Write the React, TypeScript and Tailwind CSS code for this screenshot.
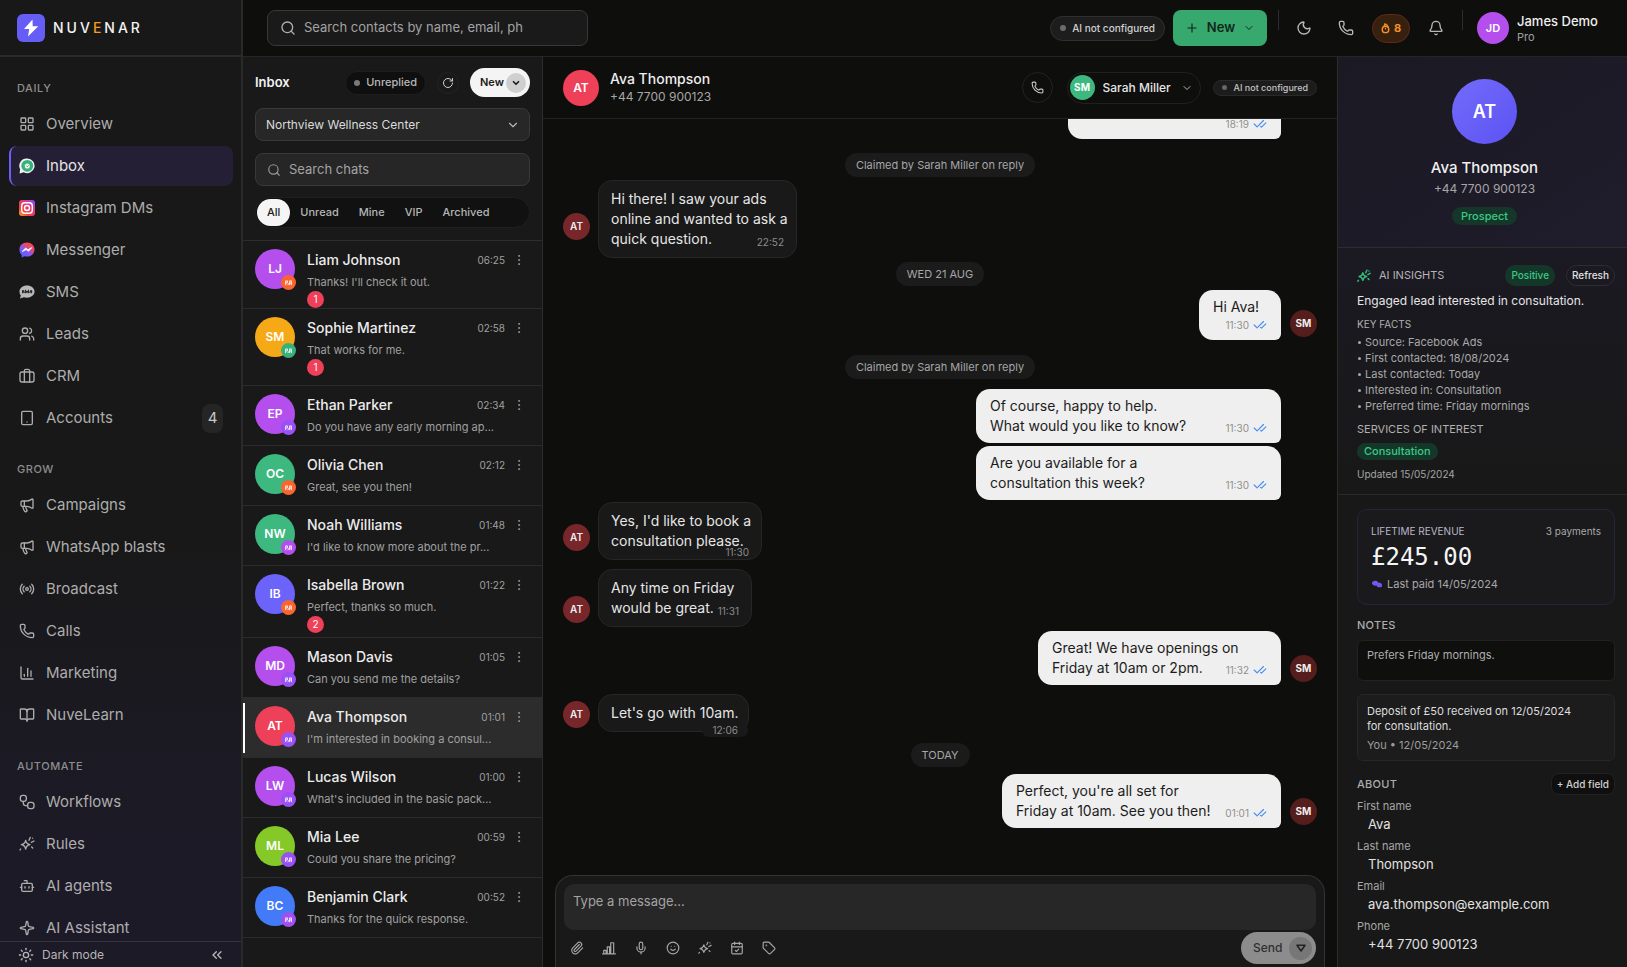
import { useState } from "react"
import type { ComponentType, ReactNode } from "react"
import {
  Bell,
  BookOpen,
  Bot,
  CalendarCheck,
  ChartColumn,
  CheckCheck,
  ChevronDown,
  ChevronsLeft,
  EllipsisVertical,
  LayoutGrid,
  Megaphone,
  Mic,
  Moon,
  Paperclip,
  Phone,
  Plus,
  Radio,
  RotateCw,
  Search,
  Smile,
  Sparkle,
  Sun,
  Tablet,
  Tag,
  Users,
} from "lucide-react"

type IconType = ComponentType<{ className?: string; strokeWidth?: number | string }>

function Stroke({ className, children, strokeWidth = 2 }: { className?: string; children: ReactNode; strokeWidth?: number | string }) {
  return (
    <svg
      viewBox="0 0 24 24"
      fill="none"
      stroke="currentColor"
      strokeWidth={strokeWidth}
      strokeLinecap="round"
      strokeLinejoin="round"
      className={className}
      aria-hidden="true"
    >
      {children}
    </svg>
  )
}

const SuitcaseIcon: IconType = (props) => (
  <Stroke {...props}>
    <rect x="1.5" y="6" width="21" height="15" rx="3" />
    <path d="M8 21V4.5A2.5 2.5 0 0 1 10.500 2h3A2.500 2.500 0 0 1 16 4.500V21" />
  </Stroke>
)

const WorkflowIcon: IconType = (props) => (
  <Stroke {...props}>
    <rect x="2" y="2" width="9" height="9" rx="3.500" />
    <rect x="13" y="12.500" width="9.500" height="9.500" rx="3.500" />
    <path d="M6.500 11v3a3.500 3.500 0 0 0 3.500 3.500h3" />
  </Stroke>
)

const SparklesIcon: IconType = (props) => (
  <Stroke {...props}>
    <path d="M10 6.500c.8 4 2.500 5.700 6.500 6.500-4 .8-5.700 2.500-6.500 6.500-.8-4-2.500-5.700-6.500-6.500 4-.8 5.700-2.500 6.500-6.500z" />
    <path d="M15 6.500 17 2M18.500 9.500l4-2M20.500 3.200v.1M2.500 19.500 1.500 21M19 16.500l1.500 1.500" />
  </Stroke>
)

const BarsIcon: IconType = (props) => (
  <Stroke {...props}>
    <path d="M1 22h22M3 22v-6h4v6M9 22V10h4v12M15 22V3h5v19" />
  </Stroke>
)

function WhatsappIcon({ className }: { className?: string }) {
  return (
    <svg viewBox="0 0 17 17" className={className} aria-hidden="true">
      <path d="M8.700.5a7.800 7.800 0 1 1-3.600 14.700L.6 16.500l.6-4.600A7.800 7.800 0 0 1 8.700.5z" fill="#f1f1f1" />
      <circle cx="8.800" cy="8.300" r="6.300" fill="#35b27a" />
      <circle cx="8.800" cy="8.500" r="2.700" fill="#f1f1f1" />
      <path d="M7.800 8.200 8.900 9.300l1.300-1.700" stroke="#35b27a" fill="none" />
    </svg>
  )
}

function InstagramIcon({ className }: { className?: string }) {
  return (
    <svg viewBox="0 0 16 16" className={className} aria-hidden="true">
      <defs>
        <linearGradient id="ig" x1="0" y1="1" x2="0.900" y2="0">
          <stop offset="0" stopColor="#fbab22" />
          <stop offset="0.300" stopColor="#f4433c" />
          <stop offset="0.650" stopColor="#e3397a" />
          <stop offset="1" stopColor="#8a4bf0" />
        </linearGradient>
      </defs>
      <rect width="16" height="16" rx="3" fill="url(#ig)" />
      <rect x="2.700" y="2.700" width="10.600" height="10.600" rx="3.200" fill="none" stroke="#fff" strokeWidth="1.400" />
      <circle cx="8" cy="8" r="2.500" fill="none" stroke="#fff" strokeWidth="1.400" />
    </svg>
  )
}

function MessengerIcon({ className }: { className?: string }) {
  return (
    <svg viewBox="0 0 17 17" className={className} aria-hidden="true">
      <defs>
        <linearGradient id="ms" x1="0.100" y1="1" x2="0.800" y2="0">
          <stop offset="0" stopColor="#3f6bff" />
          <stop offset="0.450" stopColor="#8a55f5" />
          <stop offset="0.750" stopColor="#f0475c" />
          <stop offset="1" stopColor="#f0475c" />
        </linearGradient>
      </defs>
      <path d="M8.500.5c4.700 0 8 3.200 8 7.500s-3.300 7.500-8 7.500c-.9 0-1.700-.1-2.500-.4L3 16.500l-.3-2.900A7.200 7.200 0 0 1 .5 8C.5 3.700 3.800.5 8.500.5z" fill="url(#ms)" />
      <path d="m3.500 10 3.600-3.500 2.300 1.700L13.500 6 10 9.800 7.600 8z" fill="#fff" stroke="#fff" strokeLinejoin="round" />
    </svg>
  )
}

function SmsIcon({ className }: { className?: string }) {
  return (
    <svg viewBox="0 0 17 17" className={className} aria-hidden="true">
      <path d="M8.500 1.500c4.500 0 8 2.800 8 6.500s-3.500 6.500-8 6.500c-1.200 0-2.300-.2-3.300-.5L1 15.500l1-3.300A6 6 0 0 1 .5 8c0-3.700 3.500-6.500 8-6.500z" fill="#b9b9b9" />
      <path d="M3.800 9.700V7.300l1.200-.1.600 2.500M7 9.700V7.200l1.500 1.600L10 7.200v2.500M11.500 9.700l.7-2.500 1.200.1v2.400" stroke="#222" fill="none" strokeWidth="1.200" />
    </svg>
  )
}

type NavItem = { label: string; icon: IconType; badge?: string; active?: boolean }

const navSections: { title: string; items: NavItem[] }[] = [
  {
    title: "DAILY",
    items: [
      { label: "Overview", icon: LayoutGrid },
      { label: "Inbox", icon: WhatsappIcon, active: true },
      { label: "Instagram DMs", icon: InstagramIcon },
      { label: "Messenger", icon: MessengerIcon },
      { label: "SMS", icon: SmsIcon },
      { label: "Leads", icon: Users },
      { label: "CRM", icon: SuitcaseIcon },
      { label: "Accounts", icon: Tablet, badge: "4" },
    ],
  },
  {
    title: "GROW",
    items: [
      { label: "Campaigns", icon: Megaphone },
      { label: "WhatsApp blasts", icon: Megaphone },
      { label: "Broadcast", icon: Radio },
      { label: "Calls", icon: Phone },
      { label: "Marketing", icon: ChartColumn },
      { label: "NuveLearn", icon: BookOpen },
    ],
  },
  {
    title: "AUTOMATE",
    items: [
      { label: "Workflows", icon: WorkflowIcon },
      { label: "Rules", icon: SparklesIcon },
      { label: "AI agents", icon: Bot },
      { label: "AI Assistant", icon: Sparkle },
    ],
  },
]

const chats = [
  { name: "Liam Johnson", initials: "LJ", text: "Thanks! I'll check it out.", time: "06:25", color: "bg-[#b44fee]", dot: "bg-[#f9652f]", unread: 1, pad: "pb-0" },
  { name: "Sophie Martinez", initials: "SM", text: "That works for me.", time: "02:58", color: "bg-[#f6a917]", dot: "bg-[#37b079]", unread: 1, pad: "pb-[9px]" },
  { name: "Ethan Parker", initials: "EP", text: "Do you have any early morning ap...", time: "02:34", color: "bg-[#b44fee]", dot: "bg-[#9a50f5]" },
  { name: "Olivia Chen", initials: "OC", text: "Great, see you then!", time: "02:12", color: "bg-[#3db87f]", dot: "bg-[#f9652f]" },
  { name: "Noah Williams", initials: "NW", text: "I'd like to know more about the pr...", time: "01:48", color: "bg-[#3db87f]", dot: "bg-[#b44fee]" },
  { name: "Isabella Brown", initials: "IB", text: "Perfect, thanks so much.", time: "01:22", color: "bg-[#6c63fb]", dot: "bg-[#f9652f]", unread: 2, pad: "pb-1" },
  { name: "Mason Davis", initials: "MD", text: "Can you send me the details?", time: "01:05", color: "bg-[#b44fee]", dot: "bg-[#9a50f5]" },
  { name: "Ava Thompson", initials: "AT", text: "I'm interested in booking a consul...", time: "01:01", color: "bg-[#ee4058]", dot: "bg-[#9a50f5]", active: true },
  { name: "Lucas Wilson", initials: "LW", text: "What's included in the basic pack...", time: "01:00", color: "bg-[#b44fee]", dot: "bg-[#9a50f5]" },
  { name: "Mia Lee", initials: "ML", text: "Could you share the pricing?", time: "00:59", color: "bg-[#84c928]", dot: "bg-[#9a50f5]" },
  { name: "Benjamin Clark", initials: "BC", text: "Thanks for the quick response.", time: "00:52", color: "bg-[#427af8]", dot: "bg-[#a04ff2]" },
]

function Sidebar() {
  return (
    <aside className="flex w-[243px] shrink-0 flex-col border-r-2 border-[#2a2a2a] bg-linear-to-b from-[#181818] from-55% to-[#1d1a28] to-90%">
      <div className="flex h-[57px] shrink-0 items-center gap-2 border-b-2 border-[#2a2a2a] pl-[17px]">
        <span className="flex size-7 items-center justify-center rounded-md bg-[#665cf6]">
          <svg viewBox="0 0 16 18" className="h-[18px] w-4" aria-hidden="true">
            <path d="M9.500.5 1 10h5.200L5 17.500 15.300 7.200H9.700z" fill="#fff" />
          </svg>
        </span>
        <span className="text-sm font-medium tracking-[3px] text-[#f2f2f2]">
          NUV<span className="text-[#f59e1b]">E</span>NAR
        </span>
      </div>

      <nav className="min-h-0 flex-1 overflow-hidden pt-[21px]">
        {navSections.map((section) => (
          <div key={section.title} className="mb-[21px]">
            <h2 className="mb-1.5 pl-[17px] text-[11px] leading-5 font-medium tracking-wider text-[#8d8d8d]">{section.title}</h2>
            <ul className="flex flex-col gap-0.5 pr-2 pl-[9px]">
              {section.items.map(({ label, icon: Icon, badge, active }) => (
                <li key={label}>
                  <a
                    href="#"
                    className={`flex h-10 items-center rounded-lg border-l-2 pl-2 text-[15px] ${
                      active ? "border-[#6c5ff5] bg-[#251f35] text-[#e4e4e4]" : "border-transparent text-[#adadad]"
                    }`}
                  >
                    <Icon className="size-4 shrink-0" strokeWidth={2} />
                    <span className="ml-[11px] flex-1">{label}</span>
                    {badge && (
                      <span className="mr-2.5 flex h-[29px] w-[21px] items-center justify-center rounded-lg bg-[#252525] text-[15px] text-[#c8c8c8]">
                        {badge}
                      </span>
                    )}
                  </a>
                </li>
              ))}
            </ul>
          </div>
        ))}
      </nav>

      <div className="flex h-[26px] shrink-0 items-center justify-between border-t border-[#36343f] pr-4 pl-[18px] text-[#b5b5b5]">
        <button className="flex items-center gap-2 text-xs">
          <Sun className="size-4" />
          Dark mode
        </button>
        <button aria-label="Collapse sidebar">
          <ChevronsLeft className="size-4" />
        </button>
      </div>
    </aside>
  )
}

function TopBar() {
  return (
    <header className="flex h-[57px] shrink-0 items-center border-b border-[#252525] pr-7 pl-6">
      <label className="flex h-9 w-[321px] items-center gap-2 rounded-lg border border-[#383838] bg-[#1a1a1a] px-3">
        <Search className="size-4 text-[#b0b0b0]" />
        <input
          type="text"
          aria-label="Search contacts"
          placeholder="Search contacts by name, email, ph"
          className="min-w-0 flex-1 bg-transparent text-[13px] placeholder:text-[#a3a3a3] focus:outline-none"
        />
      </label>

      <div className="ml-auto flex items-center">
        <span className="flex h-[25px] items-center gap-1.5 rounded-full border border-[#303030] bg-[#1d1d1d] px-[9px] text-[10px] font-medium text-[#d0d0d0]">
          <span className="size-1.5 rounded-full bg-[#6b6b6b]" />
          AI not configured
        </span>
        <button className="ml-2 flex h-9 w-[94px] items-center justify-center gap-2 rounded-lg bg-[#37a96f] text-[13px] font-semibold text-[#10271b]">
          <Plus className="size-3.5" />
          New
          <ChevronDown className="size-3" />
        </button>
        <span className="ml-[11px] h-5 w-px self-start bg-[#2c2c2c]" />
        <button aria-label="Theme" className="ml-[17px] text-[#b8b8b8]">
          <Moon className="size-4" />
        </button>
        <button aria-label="Call" className="ml-[26px] text-[#b8b8b8]">
          <Phone className="size-4" />
        </button>
        <button className="ml-[18px] flex h-[29px] w-[38px] items-center justify-center gap-1 rounded-full border border-[#5f2a1a] bg-[#38200f] text-[11px] font-bold text-[#f5922b]">
          <svg viewBox="0 0 10 12" className="h-[11px] w-[9px]" aria-hidden="true">
            <circle cx="5" cy="7" r="3.600" fill="none" stroke="#f5922b" strokeWidth="1.600" />
            <path d="M3 3.500C4 3 4.200 2 4.500.8 6.500 1.800 7.500 3 8 4.500M5 7V5.200" fill="none" stroke="#f5922b" strokeWidth="1.400" />
          </svg>
          8
        </button>
        <button aria-label="Notifications" className="ml-[18px] text-[#b8b8b8]">
          <Bell className="size-4" />
        </button>
        <span className="ml-[18px] h-5 w-px self-start bg-[#2c2c2c]" />
        <span className="ml-3.5 flex size-8 items-center justify-center rounded-full bg-[#b44fee] text-[11px] font-semibold text-white">JD</span>
        <div className="ml-2 w-[82px] whitespace-nowrap">
          <p className="text-[13px] leading-[18px] font-medium text-[#efefef]">James Demo</p>
          <p className="text-[11px] leading-3.5 text-[#a0a0a0]">Pro</p>
        </div>
      </div>
    </header>
  )
}

const filters = ["All", "Unread", "Mine", "VIP", "Archived"]

function ChatList() {
  const [filter, setFilter] = useState("All")

  return (
    <section className="flex w-[300px] shrink-0 flex-col border-r border-[#2d2d2d] bg-[#191919]">
      <div className="border-b border-[#2d2d2d] px-3 pt-[11px] pb-3">
        <div className="flex h-[29px] items-center">
          <h1 className="mr-auto text-[13px] font-semibold text-[#f2f2f2]">Inbox</h1>
          <button className="flex h-6 items-center gap-1.5 rounded-full border border-[#1e1e1e] bg-[#0f0f0f] px-2 text-[11px] font-medium text-[#b8b8b8]">
            <span className="size-1.5 rounded-full bg-[#7a7a7a]" />
            Unreplied
          </button>
          <button aria-label="Refresh" className="mx-3 flex size-5 items-center justify-center rounded-full text-[#d0d0d0] ring-1 ring-[#222]">
            <RotateCw className="size-3" />
          </button>
          <button className="flex h-[29px] w-[60px] items-center justify-between rounded-full bg-[#f4f4f4] pr-1 pl-2.5 text-[11px] font-semibold text-[#1b1b1b]">
            New
            <span className="flex size-5 items-center justify-center rounded-full bg-[#cfcfcf]">
              <ChevronDown className="size-2.5" strokeWidth={4} />
            </span>
          </button>
        </div>

        <div className="relative mt-[11px]">
          <select
            aria-label="Location"
            className="h-[33px] w-full appearance-none rounded-lg border border-[#393939] bg-[#272727] pl-2.5 text-xs text-[#dadada]"
          >
            <option>Northview Wellness Center</option>
          </select>
          <ChevronDown className="pointer-events-none absolute top-[10px] right-2.5 size-3.5 text-[#b5b5b5]" />
        </div>

        <label className="mt-3 flex h-[33px] items-center gap-2 rounded-lg border border-[#393939] bg-[#262626] px-[11px]">
          <Search className="size-3.5 text-[#999]" />
          <input
            type="text"
            aria-label="Search chats"
            placeholder="Search chats"
            className="min-w-0 flex-1 bg-transparent text-[13px] placeholder:text-[#a3a3a3] focus:outline-none"
          />
        </label>

        <div className="mt-[11px] flex h-[31px] items-center rounded-full border border-[#1f1f1f] bg-[#111] px-px">
          {filters.map((f) => (
            <button
              key={f}
              onClick={() => setFilter(f)}
              className={`h-[27px] rounded-full px-2.5 text-[11px] font-medium ${
                f === filter ? "bg-[#f5f5f5] text-[#1b1b1b]" : "text-[#b5b5b5]"
              }`}
            >
              {f}
            </button>
          ))}
        </div>
      </div>

      <ul className="min-h-0 flex-1 overflow-hidden">
        {chats.map((chat) => (
          <li
            key={chat.name}
            className={`relative flex border-b border-[#2b2b2b] pt-2 pr-4 pl-3 ${chat.pad ?? "pb-[7px]"} ${chat.active ? "bg-[#2c2c2c]" : ""}`}
          >
            {chat.active && <span className="absolute top-[5px] bottom-1 left-0 w-0.5 bg-white" />}
            <div className={`relative flex size-10 shrink-0 items-center justify-center rounded-full text-xs font-semibold text-white ${chat.color}`}>
              {chat.initials}
              <span className={`absolute -right-px -bottom-px flex size-[15px] items-center justify-center rounded-full ${chat.dot}`}>
                <svg viewBox="0 0 8 7" className="h-[6px] w-[7px]" aria-hidden="true">
                  <path d="M.7 6V1h2v2.500h-2M5.300 6V1h2v5M3 6l2-2.500M5.300 3.500h2" fill="none" stroke="#fff" />
                </svg>
              </span>
            </div>
            <div className="ml-3 min-w-0 flex-1">
              <div className="flex h-[22px] items-center">
                <h3 className="flex-1 truncate text-sm font-medium text-[#ececec]">{chat.name}</h3>
                <time className="text-[10px] text-[#a0a0a0]">{chat.time}</time>
                <button aria-label="Chat options" className="ml-[7px] text-[#999]">
                  <EllipsisVertical className="size-3.5" strokeWidth={1.5} />
                </button>
              </div>
              <p className="text-[11px] leading-[22px] whitespace-nowrap text-[#a0a0a0]">{chat.text}</p>
              {chat.unread && (
                <span className="-mt-0.5 flex size-[17px] items-center justify-center rounded-full bg-[#ee4058] text-[10px] text-white">
                  {chat.unread}
                </span>
              )}
            </div>
          </li>
        ))}
      </ul>
    </section>
  )
}

function Meta({ time, className }: { time: string; className?: string }) {
  return (
    <span className={`flex items-center gap-1 text-[10px] text-[#8f8f8f] ${className ?? ""}`}>
      {time}
      <CheckCheck className="size-3.5 text-[#4c8df0]" />
    </span>
  )
}

function Incoming({
  lines,
  time,
  width,
  gap,
  timePos = "right-3 bottom-2",
  avatarGap = "mb-1",
}: {
  lines: string[]
  time: string
  width: string
  gap: string
  timePos?: string
  avatarGap?: string
}) {
  return (
    <div className={`flex items-end gap-2 ${gap}`}>
      <span className={`flex size-[27px] items-center justify-center rounded-full bg-[#77262a] text-[10px] font-semibold text-[#eee] ${avatarGap}`}>AT</span>
      <div className={`relative rounded-[14px] border border-[#262626] bg-[#191919] px-3 py-2 text-sm leading-5 whitespace-nowrap text-[#e6e6e6] ${width}`}>
        {lines.map((line) => (
          <p key={line}>{line}</p>
        ))}
        <time className={`absolute text-[10px] leading-3.5 text-[#8c8c8c] ${timePos}`}>{time}</time>
      </div>
    </div>
  )
}

function Outgoing({ lines, time, width, gap, avatar, stacked }: { lines: string[]; time: string; width: string; gap: string; avatar?: boolean; stacked?: boolean }) {
  return (
    <div className={`flex items-end justify-end gap-[9px] ${gap}`}>
      <div className={`relative rounded-[14px] rounded-br-md bg-[#efefef] px-3.5 py-[7px] text-sm leading-5 whitespace-nowrap text-[#1c1c1c] ${width}`}>
        {lines.map((line) => (
          <p key={line}>{line}</p>
        ))}
        <Meta time={time} className={stacked ? "justify-end leading-4" : "absolute right-3.5 bottom-2 leading-3.5"} />
      </div>
      {avatar ? (
        <span className="mb-[3px] flex size-[27px] items-center justify-center rounded-full bg-[#551d1b] text-[10px] font-bold text-[#eee]">SM</span>
      ) : (
        <span className="w-[27px]" />
      )}
    </div>
  )
}

function Divider({ children, gap }: { children: ReactNode; gap: string }) {
  return (
    <div className={`flex justify-center ${gap}`}>
      <span className="flex h-6 items-center rounded-full bg-[#1b1b1b] px-[11px] text-[11px] text-[#a6a6a6]">{children}</span>
    </div>
  )
}

const composerTools: { label: string; icon: IconType }[] = [
  { label: "Attach", icon: Paperclip },
  { label: "Poll", icon: BarsIcon },
  { label: "Record", icon: Mic },
  { label: "Emoji", icon: Smile },
  { label: "AI reply", icon: SparklesIcon },
  { label: "Schedule", icon: CalendarCheck },
  { label: "Tag", icon: Tag },
]

function Conversation() {
  return (
    <main className="flex min-w-0 flex-1 flex-col bg-[#0e0e0d]">
      <div className="flex h-[62px] shrink-0 items-center border-b border-[#232323] pr-5 pl-5">
        <span className="flex size-9 items-center justify-center rounded-full bg-[#ee4058] text-xs font-semibold text-white">AT</span>
        <div className="ml-[11px]">
          <h2 className="text-sm leading-[18px] font-medium text-[#ededed]">Ava Thompson</h2>
          <p className="text-xs leading-[18px] text-[#a6a6a6]">+44 7700 900123</p>
        </div>
        <button aria-label="Call contact" className="ml-auto flex size-[31px] items-center justify-center rounded-full border border-[#232323] text-[#c9c9c9]">
          <Phone className="size-[13px]" />
        </button>
        <div className="relative ml-3.5">
          <span className="absolute top-[3px] left-[3px] flex size-[25px] items-center justify-center rounded-full bg-[#3db87f] text-[10px] font-bold text-white">SM</span>
          <select aria-label="Assigned to" className="h-8 w-[134px] appearance-none rounded-full border border-[#202020] bg-transparent pl-[35px] text-xs font-medium text-[#e6e6e6]">
            <option>Sarah Miller</option>
          </select>
          <ChevronDown className="pointer-events-none absolute top-2.5 right-2 size-3 text-[#b5b5b5]" />
        </div>
        <span className="ml-3 flex h-4 items-center gap-[7px] rounded-full border border-[#2a2a2a] bg-[#1c1c1c] px-2 text-[9px] font-medium text-[#c4c4c4]">
          <span className="size-[5px] rounded-full bg-[#666]" />
          AI not configured
        </span>
      </div>

      <div className="min-h-0 flex-1 overflow-hidden pr-5 pl-5">
        <div className="mr-9 ml-auto flex h-5 w-[213px] justify-end rounded-b-[14px] rounded-br-md bg-[#efefef] pr-3.5">
          <Meta time="18:19" className="h-2.5 leading-3.5" />
        </div>
        <Divider gap="mt-3.5">Claimed by Sarah Miller on reply</Divider>
        <Incoming gap="mt-[3px]" width="w-[199px]" avatarGap="mb-[18px]" lines={["Hi there! I saw your ads", "online and wanted to ask a", "quick question."]} time="22:52" />
        <Divider gap="mt-1">WED 21 AUG</Divider>
        <Outgoing gap="mt-1" width="w-[82px]" lines={["Hi Ava!"]} time="11:30" avatar stacked />
        <Divider gap="mt-[15px]">Claimed by Sarah Miller on reply</Divider>
        <Outgoing gap="mt-2.5" width="w-[305px]" lines={["Of course, happy to help.", "What would you like to know?"]} time="11:30" />
        <Outgoing gap="mt-[3px]" width="w-[305px]" lines={["Are you available for a", "consultation this week?"]} time="11:30" />
        <Incoming gap="mt-0.5" width="w-[164px]" avatarGap="mb-[9px]" lines={["Yes, I'd like to book a", "consultation please."]} time="11:30" timePos="right-3 bottom-0" />
        <Incoming gap="mt-[9px]" width="w-[154px]" lines={["Any time on Friday", "would be great."]} time="11:31" />
        <Outgoing gap="mt-1" width="w-[243px]" lines={["Great! We have openings on", "Friday at 10am or 2pm."]} time="11:32" avatar />
        <Incoming
          gap="mt-[9px]"
          width="w-[151px]"
          lines={["Let's go with 10am."]}
          time="12:06"
          timePos="right-0 -bottom-1.5 rounded-full bg-[#191919] px-2.5"
        />
        <Divider gap="mt-[11px]">TODAY</Divider>
        <Outgoing gap="mt-[7px]" width="w-[279px]" lines={["Perfect, you're all set for", "Friday at 10am. See you then!"]} time="01:01" avatar />
      </div>

      <div className="mx-3 shrink-0 rounded-t-[18px] border border-b-0 border-[#333] bg-[#191919] px-2 pt-2">
        <textarea
          aria-label="Message"
          placeholder="Type a message..."
          className="block h-[46px] w-full resize-none rounded-[10px] bg-[#272727] px-[9px] pt-2 text-[13px] placeholder:text-[#a3a3a3] focus:outline-none"
        />
        <div className="mt-0.5 flex h-[35px] items-start">
          <div className="flex h-8 items-center gap-[18px] pl-1.5 text-[#a6a6a6]">
            {composerTools.map(({ label, icon: Icon }) => (
              <button key={label} aria-label={label}>
                <Icon className="size-3.5" />
              </button>
            ))}
          </div>
          <button className="ml-auto flex h-8 w-[75px] items-center justify-between rounded-full bg-[#8c8c8c] pr-1 pl-3 text-xs font-medium text-[#303030]">
            Send
            <span className="flex size-[23px] items-center justify-center rounded-full bg-[#777]">
              <svg viewBox="0 0 10 8" className="h-2 w-2.5" aria-hidden="true">
                <path d="M1 1.200h8L5 7z" fill="none" stroke="#222" strokeWidth="1.500" strokeLinejoin="round" />
              </svg>
            </span>
          </button>
        </div>
      </div>
    </main>
  )
}

const facts = [
  "Source: Facebook Ads",
  "First contacted: 18/08/2024",
  "Last contacted: Today",
  "Interested in: Consultation",
  "Preferred time: Friday mornings",
]

const fields = [
  { id: "first", label: "First name", value: "Ava" },
  { id: "last", label: "Last name", value: "Thompson" },
  { id: "email", label: "Email", value: "ava.thompson@example.com" },
  { id: "phone", label: "Phone", value: "+44 7700 900123" },
]

function ContactPanel() {
  return (
    <aside className="flex w-[290px] shrink-0 flex-col overflow-hidden border-l border-[#2d2d2d] bg-[#181818]">
      <div className="flex shrink-0 flex-col items-center border-b border-[#2d2d2d] bg-linear-to-br from-[#1b1922] to-[#1f1c2c] pt-[22px] pb-[22px] pl-1">
        <span className="flex size-[65px] items-center justify-center rounded-full bg-linear-to-br from-[#736bfb] to-[#5d52f3] text-lg font-semibold text-white">AT</span>
        <h2 className="mt-[13px] text-[15px] leading-[22px] font-medium text-[#f0f0f0]">Ava Thompson</h2>
        <p className="text-xs leading-5 text-[#a6a6a6]">+44 7700 900123</p>
        <span className="mt-2 flex h-[18px] items-center rounded-full bg-[#15372a] px-[9px] text-[11px] font-medium text-[#3cc986]">Prospect</span>
      </div>

      <div className="shrink-0 border-b border-[#2a2a2a] bg-linear-to-b from-[#1b1922] to-[#181818] pt-[17px] pr-3 pb-3 pl-[19px]">
        <div className="flex h-[21px] items-center">
          <SparklesIcon className="size-3.5 text-[#35b878]" strokeWidth={2.5} />
          <h3 className="ml-2 text-[11px] text-[#b5b5b5]">AI INSIGHTS</h3>
          <span className="ml-auto flex h-[21px] items-center rounded-full bg-[#15372a] px-1.5 text-[10px] font-medium text-[#3cc986]">Positive</span>
          <button className="ml-[11px] h-[21px] rounded-full border border-[#2e2e2e] px-[5px] text-[10px] font-medium text-[#e0e0e0]">Refresh</button>
        </div>
        <p className="mt-1.5 text-xs leading-[18px] whitespace-nowrap text-[#e6e6e6]">Engaged lead interested in consultation.</p>
        <h4 className="mt-1.5 text-[10px] leading-4 text-[#b0b0b0]">KEY FACTS</h4>
        <ul className="mt-0.5 text-[11px] leading-4 text-[#a8a8a8]">
          {facts.map((fact) => (
            <li key={fact} className="flex items-center gap-1 pl-px">
              <span className="size-[3px] rounded-full bg-[#a8a8a8]" />
              {fact}
            </li>
          ))}
        </ul>
        <h4 className="mt-[7px] text-[11px] leading-4 text-[#b0b0b0]">SERVICES OF INTEREST</h4>
        <span className="mt-[3px] inline-flex h-[17px] items-center rounded-full bg-[#15372a] px-[7px] text-[11px] font-medium text-[#3cc986]">Consultation</span>
        <p className="mt-[5px] text-[10px] leading-4 text-[#a5a5a5]">Updated 15/05/2024</p>
      </div>

      <div className="shrink-0 pt-3.5 pr-3 pl-[19px]">
        <div className="rounded-[10px] border border-[#29243d] bg-[#1a191c] px-[13px] pt-3 pb-2.5">
          <div className="flex h-[18px] items-center justify-between text-[10px]">
            <h3 className="text-[#bbb7c8]">LIFETIME REVENUE</h3>
            <span className="text-[#a8a8a8]">3 payments</span>
          </div>
          <p className="font-['DejaVu_Sans_Mono',monospace] text-2xl leading-[34px] text-[#f5f5f5]">£245.00</p>
          <p className="flex h-5 items-center gap-1 text-[11px] text-[#a8a8a8]">
            <svg viewBox="0 0 12 8" className="h-2 w-3" aria-hidden="true">
              <path d="M1 2.500C2 .5 6.500 0 7 2.500c3 0 4.500 1.500 4 4-2 1.500-5 1-5.500-1C3.500 6 .5 5 1 2.500z" fill="#7158f2" />
            </svg>
            Last paid 14/05/2024
          </p>
        </div>

        <h3 className="mt-[11px] text-[11px] leading-[18px] font-medium tracking-wide text-[#acacac]">NOTES</h3>
        <textarea
          aria-label="Notes"
          defaultValue="Prefers Friday mornings."
          className="mt-1.5 block h-[41px] w-full resize-none rounded-md border border-[#222] bg-[#0f0f0e] px-[9px] pt-1.5 text-[11px] leading-4 text-[#adadad] focus:outline-none"
        />
        <div className="mt-[13px] rounded-md border border-[#272727] bg-[#1c1c1c] px-[9px] pt-[9px] pb-1.5">
          <p className="text-[11px] leading-[15px] text-[#dedede]">
            Deposit of £50 received on 12/05/2024
            <br />
            for consultation.
          </p>
          <p className="mt-0.5 text-[11px] leading-[18px] text-[#9d9d9d]">You • 12/05/2024</p>
        </div>

        <div className="mt-3 flex h-[22px] items-center justify-between">
          <h3 className="text-[11px] font-medium tracking-wide text-[#acacac]">ABOUT</h3>
          <button className="h-[22px] rounded-lg border border-[#222] bg-[#0f0f0f] px-[5px] text-[10px] font-medium text-[#cfcfcf]">+ Add field</button>
        </div>
        <div className="mt-[3px]">
          {fields.map((field) => (
            <div key={field.id} className="mb-1">
              <label htmlFor={field.id} className="block text-[11px] leading-4 text-[#a6a6a6]">
                {field.label}
              </label>
              <input
                id={field.id}
                type="text"
                defaultValue={field.value}
                className="block h-5 w-full bg-transparent pl-[11px] text-[13px] text-[#e2e2e2] focus:outline-none"
              />
            </div>
          ))}
        </div>
      </div>
    </aside>
  )
}

export default function App() {
  return (
    <div className="flex h-screen overflow-hidden bg-[#0e0e0d] font-['Inter',sans-serif] text-[#e6e6e6]">
      <Sidebar />
      <div className="flex min-w-0 flex-1 flex-col">
        <TopBar />
        <div className="flex min-h-0 flex-1">
          <ChatList />
          <Conversation />
          <ContactPanel />
        </div>
      </div>
    </div>
  )
}
